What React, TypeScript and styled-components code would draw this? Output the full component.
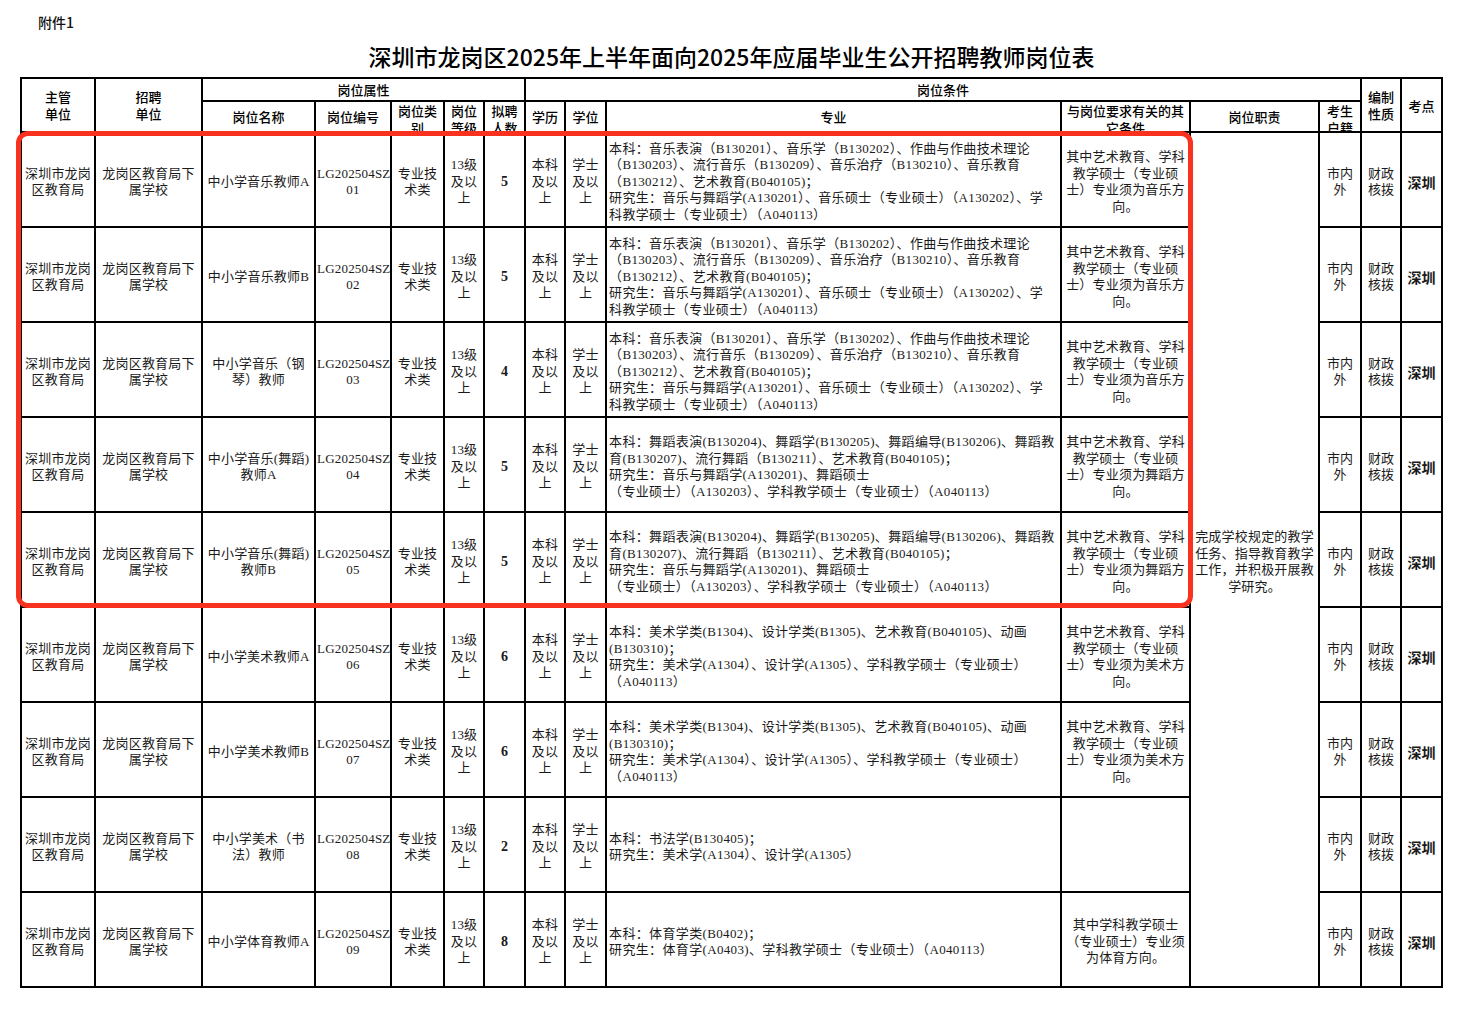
import React from 'react';
import styled, { createGlobalStyle } from 'styled-components';

const GlobalStyle = createGlobalStyle`
  body {
    margin: 0;
    background: #ffffff;
    color: #111111;
    font-family: 'Liberation Serif', 'Noto Sans CJK SC', serif;
  }
`;

const Page = styled.div`
  width: 1468px;
  padding: 14px 0 0 20px;
  box-sizing: border-box;
`;

const Attachment = styled.div`
  padding-left: 18px;
  height: 16px;
  line-height: 16px;
  font-family: 'Noto Sans CJK SC', sans-serif;
  font-size: 14px;
  font-weight: 500;
  color: #111;
`;

const Title = styled.h1`
  width: 1423px;
  margin: 11px 0 6px;
  height: 30px;
  line-height: 30px;
  text-align: center;
  font-family: 'Noto Sans CJK SC', sans-serif;
  font-size: 23px;
  font-weight: 500;
  color: #000;
`;

const TableWrap = styled.div`
  position: relative;
  width: 1423px;
`;

const Sheet = styled.table`
  width: 1423px;
  table-layout: fixed;
  border-collapse: separate;
  border-spacing: 0;
  border-top: 2px solid #000;
  border-left: 2px solid #000;
  font-size: 13px;
`;

const HeadRow = styled.tr<{ $h: number }>`
  height: ${p => p.$h}px;
`;

const BodyRow = styled.tr`
  height: 95px;
`;

const HeadCell = styled.th`
  border-right: 2px solid #000;
  border-bottom: 2px solid #000;
  padding: 0 2px;
  font-family: 'Noto Sans CJK SC', sans-serif;
  font-weight: 500;
  font-size: 13px;
  line-height: 17px;
  color: #000;
  text-align: center;
  vertical-align: middle;
`;

const HeadBox = styled.div<{ $clip?: boolean }>`
  height: 29px;
  overflow: hidden;
  display: flex;
  flex-direction: column;
  justify-content: ${p => (p.$clip ? 'flex-start' : 'center')};
  line-height: 17px;
`;

const Cell = styled.td<{ $left?: boolean; $strong?: boolean; $sans?: boolean }>`
  border-right: 2px solid #000;
  border-bottom: 2px solid #000;
  padding: 5px ${p => (p.$left ? '2px' : '1px')} 0;
  text-align: ${p => (p.$left ? 'left' : 'center')};
  vertical-align: middle;
  white-space: nowrap;
  overflow: hidden;
  line-height: 16.5px;
  letter-spacing: ${p => (p.$left ? '0.35px' : '0.2px')};
  color: #1a1a1a;
  font-size: ${p => (p.$strong ? '14px' : '13px')};
  font-weight: ${p => (p.$strong ? 700 : 400)};
  font-family: ${p =>
    p.$sans
      ? "'Noto Sans CJK SC', sans-serif"
      : "'Liberation Serif', 'Noto Sans CJK SC', serif"};
`;

const Highlight = styled.div`
  position: absolute;
  left: -4px;
  top: 54px;
  width: 1177px;
  height: 477px;
  box-sizing: border-box;
  border: 5px solid #f8321f;
  border-radius: 12px;
  pointer-events: none;
`;

const Lines = ({ items }: { items: string[] }) => (
  <>
    {items.map((t, i) => (
      <React.Fragment key={i}>
        {i > 0 && <br />}
        {t}
      </React.Fragment>
    ))}
  </>
);

const widths = [74, 107, 113, 76, 53, 40, 41, 40, 41, 455, 129, 129, 42, 40, 41];

const musicMajor = [
  '本科：音乐表演（B130201）、音乐学（B130202）、作曲与作曲技术理论',
  '（B130203）、流行音乐（B130209）、音乐治疗（B130210）、音乐教育',
  '（B130212）、艺术教育(B040105)；',
  '研究生：音乐与舞蹈学(A130201）、音乐硕士（专业硕士）（A130202）、学',
  '科教学硕士（专业硕士）（A040113）',
];

const danceMajor = [
  '本科：舞蹈表演(B130204)、舞蹈学(B130205)、舞蹈编导(B130206)、舞蹈教',
  '育(B130207)、流行舞蹈（B130211）、艺术教育(B040105)；',
  '研究生：音乐与舞蹈学(A130201)、舞蹈硕士',
  '（专业硕士）（A130203）、学科教学硕士（专业硕士）（A040113）',
];

const artMajor = [
  '本科：美术学类(B1304)、设计学类(B1305)、艺术教育(B040105)、动画',
  '(B130310)；',
  '研究生：美术学(A1304）、设计学(A1305）、学科教学硕士（专业硕士）',
  '（A040113）',
];

const other = (dir: string) => [
  '其中艺术教育、学科',
  '教学硕士（专业硕',
  `士）专业须为${dir}方`,
  '向。',
];

type Post = {
  name: string[];
  code: string;
  count: number;
  major: string[];
  other: string[];
};

const posts: Post[] = [
  { name: ['中小学音乐教师A'], code: '01', count: 5, major: musicMajor, other: other('音乐') },
  { name: ['中小学音乐教师B'], code: '02', count: 5, major: musicMajor, other: other('音乐') },
  { name: ['中小学音乐（钢', '琴）教师'], code: '03', count: 4, major: musicMajor, other: other('音乐') },
  { name: ['中小学音乐(舞蹈)', '教师A'], code: '04', count: 5, major: danceMajor, other: other('舞蹈') },
  { name: ['中小学音乐(舞蹈)', '教师B'], code: '05', count: 5, major: danceMajor, other: other('舞蹈') },
  { name: ['中小学美术教师A'], code: '06', count: 6, major: artMajor, other: other('美术') },
  { name: ['中小学美术教师B'], code: '07', count: 6, major: artMajor, other: other('美术') },
  {
    name: ['中小学美术（书', '法）教师'],
    code: '08',
    count: 2,
    major: ['本科：书法学(B130405)；', '研究生：美术学(A1304）、设计学(A1305）'],
    other: [],
  },
  {
    name: ['中小学体育教师A'],
    code: '09',
    count: 8,
    major: ['本科：体育学类(B0402)；', '研究生：体育学(A0403)、学科教学硕士（专业硕士）（A040113）'],
    other: ['其中学科教学硕士', '（专业硕士）专业须', '为体育方向。'],
  },
];

const App = () => {
  return (
    <Page>
      <GlobalStyle />
      <Attachment>附件1</Attachment>
      <Title>深圳市龙岗区2025年上半年面向2025年应届毕业生公开招聘教师岗位表</Title>
      <TableWrap>
        <Sheet>
          <colgroup>
            {widths.map((w, i) => (
              <col key={i} style={{ width: w }} />
            ))}
          </colgroup>
          <thead>
            <HeadRow $h={23}>
              <HeadCell rowSpan={2}>
                <Lines items={['主管', '单位']} />
              </HeadCell>
              <HeadCell rowSpan={2}>
                <Lines items={['招聘', '单位']} />
              </HeadCell>
              <HeadCell colSpan={5}>岗位属性</HeadCell>
              <HeadCell colSpan={6}>岗位条件</HeadCell>
              <HeadCell rowSpan={2}>
                <Lines items={['编制', '性质']} />
              </HeadCell>
              <HeadCell rowSpan={2}>考点</HeadCell>
            </HeadRow>
            <HeadRow $h={31}>
              <HeadCell>
                <HeadBox>岗位名称</HeadBox>
              </HeadCell>
              <HeadCell>
                <HeadBox>岗位编号</HeadBox>
              </HeadCell>
              <HeadCell>
                <HeadBox $clip>
                  <Lines items={['岗位类', '别']} />
                </HeadBox>
              </HeadCell>
              <HeadCell>
                <HeadBox $clip>
                  <Lines items={['岗位', '等级']} />
                </HeadBox>
              </HeadCell>
              <HeadCell>
                <HeadBox $clip>
                  <Lines items={['拟聘', '人数']} />
                </HeadBox>
              </HeadCell>
              <HeadCell>
                <HeadBox>学历</HeadBox>
              </HeadCell>
              <HeadCell>
                <HeadBox>学位</HeadBox>
              </HeadCell>
              <HeadCell>
                <HeadBox>专业</HeadBox>
              </HeadCell>
              <HeadCell>
                <HeadBox $clip>
                  <Lines items={['与岗位要求有关的其', '它条件']} />
                </HeadBox>
              </HeadCell>
              <HeadCell>
                <HeadBox>岗位职责</HeadBox>
              </HeadCell>
              <HeadCell>
                <HeadBox $clip>
                  <Lines items={['考生', '户籍']} />
                </HeadBox>
              </HeadCell>
            </HeadRow>
          </thead>
          <tbody>
            {posts.map((p, i) => (
              <BodyRow key={p.code}>
                <Cell>
                  <Lines items={['深圳市龙岗', '区教育局']} />
                </Cell>
                <Cell>
                  <Lines items={['龙岗区教育局下', '属学校']} />
                </Cell>
                <Cell>
                  <Lines items={p.name} />
                </Cell>
                <Cell>
                  <Lines items={['LG202504SZ', p.code]} />
                </Cell>
                <Cell>
                  <Lines items={['专业技', '术类']} />
                </Cell>
                <Cell>
                  <Lines items={['13级', '及以', '上']} />
                </Cell>
                <Cell $strong>{p.count}</Cell>
                <Cell>
                  <Lines items={['本科', '及以', '上']} />
                </Cell>
                <Cell>
                  <Lines items={['学士', '及以', '上']} />
                </Cell>
                <Cell $left>
                  <Lines items={p.major} />
                </Cell>
                <Cell>
                  <Lines items={p.other} />
                </Cell>
                {i === 0 && (
                  <Cell rowSpan={posts.length}>
                    <Lines
                      items={['完成学校规定的教学', '任务、指导教育教学', '工作，并积极开展教', '学研究。']}
                    />
                  </Cell>
                )}
                <Cell>
                  <Lines items={['市内', '外']} />
                </Cell>
                <Cell>
                  <Lines items={['财政', '核拨']} />
                </Cell>
                <Cell $strong $sans>
                  深圳
                </Cell>
              </BodyRow>
            ))}
          </tbody>
        </Sheet>
        <Highlight />
      </TableWrap>
    </Page>
  );
};

export default App;
